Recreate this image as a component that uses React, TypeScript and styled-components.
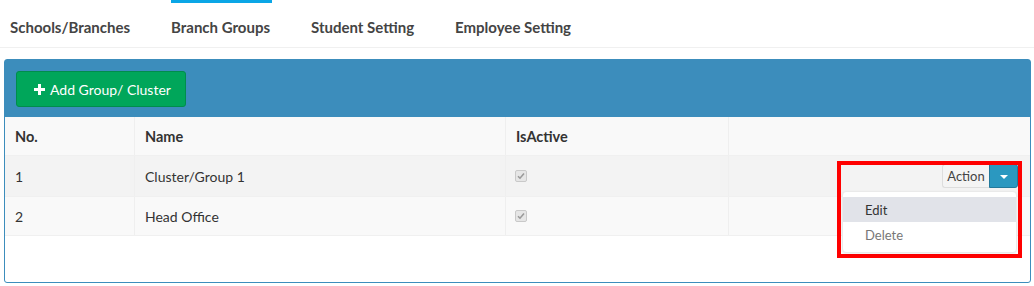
import React from "react";
import styled, { createGlobalStyle } from "styled-components";

const Global = createGlobalStyle`
  html, body { margin: 0; padding: 0; background: #ffffff; }
  body { font-family: "Lato", "Noto Sans", "Liberation Sans", sans-serif; font-size: 14px; color: #333; }
  * { box-sizing: border-box; }
`;

const Page = styled.div`
  width: 1034px;
  height: 286px;
  overflow: hidden;
`;

const TabBar = styled.div`
  display: flex;
  height: 48px;
  padding-left: 10px;
  gap: 41px;
  border-bottom: 1px solid #f0f0f0;
`;

const Tab = styled.div<{ $active?: boolean }>`
  position: relative;
  display: flex;
  align-items: center;
  font-weight: 700;
  font-size: 15px;
  color: #444;
  padding-top: 6px;
  &::before {
    content: "";
    position: absolute;
    left: 0;
    right: -2px;
    top: 0;
    height: 3px;
    background: ${(p) => (p.$active ? "#0aa6e6" : "transparent")};
  }
`;

const Panel = styled.div`
  margin: 11px 3px 0 4px;
  height: 224px;
  border: 1px solid #3c8dbc;
  border-radius: 3px;
  display: flex;
  flex-direction: column;
`;

const PanelHead = styled.div`
  background: #3c8dbc;
  padding: 11px 11px 10px;
  display: flex;
`;

const AddButton = styled.button`
  display: flex;
  align-items: center;
  gap: 5px;
  height: 36px;
  width: 170px;
  padding: 0 0 0 17px;
  background: #00a65a;
  border: 1px solid #008d4c;
  border-radius: 3px;
  color: #fff;
  font-family: inherit;
  font-size: 14px;
`;

const Table = styled.div`
  display: grid;
  grid-template-columns: 129px 371px 223px 1fr;
`;

const Row = styled.div<{ $bg: string; $h: number }>`
  display: contents;
  & > div {
    background: ${(p) => p.$bg};
    height: ${(p) => p.$h}px;
  }
`;

const Cell = styled.div<{ $head?: boolean; $first?: boolean }>`
  display: flex;
  align-items: center;
  padding-left: 10px;
  font-weight: ${(p) => (p.$head ? 700 : 400)};
  font-size: ${(p) => (p.$head ? "14.5px" : "14px")};
  color: #333;
  border-left: ${(p) => (p.$first ? "none" : "1px solid #efefef")};
  border-bottom: 1px solid #f0f0f0;
`;

const ActionCell = styled(Cell)`
  position: relative;
  justify-content: flex-end;
  padding-right: 12px;
  overflow: visible;
  z-index: 2;
`;

const Check = styled.span`
  width: 12px;
  height: 12px;
  margin-left: -1px;
  border: 1px solid #c9c9c9;
  border-radius: 2px;
  background: #e6e6e6;
  display: inline-flex;
  align-items: center;
  justify-content: center;
`;

const BtnGroup = styled.div`
  display: flex;
  height: 24px;
`;

const ActionBtn = styled.div`
  width: 47px;
  display: flex;
  align-items: center;
  justify-content: center;
  background: #f4f4f4;
  border: 1px solid #ddd;
  border-right: none;
  border-radius: 3px 0 0 3px;
  color: #444;
  font-size: 13px;
`;

const CaretBtn = styled.div`
  width: 29px;
  display: flex;
  align-items: center;
  justify-content: center;
  background: #2b98c0;
  border: 1px solid #23799b;
  border-radius: 0 3px 3px 0;
  &::after {
    content: "";
    border-left: 4px solid transparent;
    border-right: 4px solid transparent;
    border-top: 4px solid #fff;
    margin-top: 1px;
  }
`;

const Menu = styled.div`
  position: absolute;
  top: 35px;
  left: 113px;
  width: 175px;
  padding: 5px 0;
  background: #fff;
  border: 1px solid #eaeaea;
  border-radius: 4px;
  box-shadow: 0 1px 3px rgba(0, 0, 0, 0.08);
`;

const MenuItem = styled.div<{ $hover?: boolean }>`
  height: 25px;
  display: flex;
  align-items: center;
  padding-left: 22px;
  font-size: 13px;
  color: ${(p) => (p.$hover ? "#333" : "#777")};
  background: ${(p) => (p.$hover ? "#e1e3e9" : "transparent")};
`;

const Highlight = styled.div`
  position: absolute;
  top: 5px;
  left: 108px;
  width: 185px;
  height: 97px;
  border: 4px solid #ff0000;
  pointer-events: none;
`;

const CheckBox = () => (
  <Check>
    <svg width="8" height="8" viewBox="0 0 8 8">
      <path d="M1 4.2 L3 6.2 L7 1.6" stroke="#9a9a9a" strokeWidth="1.6" fill="none" />
    </svg>
  </Check>
);

export default function App() {
  return (
    <Page>
      <Global />
      <TabBar>
        <Tab>Schools/Branches</Tab>
        <Tab $active>Branch Groups</Tab>
        <Tab>Student Setting</Tab>
        <Tab>Employee Setting</Tab>
      </TabBar>
      <Panel>
        <PanelHead>
          <AddButton>
            <svg width="11" height="11" viewBox="0 0 11 11">
              <path d="M4 0h3v4h4v3H7v4H4V7H0V4h4z" fill="#fff" />
            </svg>
            Add Group/ Cluster
          </AddButton>
        </PanelHead>
        <Table>
          <Row $bg="#f9f9f9" $h={39}>
            <Cell $head $first>No.</Cell>
            <Cell $head>Name</Cell>
            <Cell $head>IsActive</Cell>
            <Cell $head></Cell>
          </Row>
          <Row $bg="#f3f3f3" $h={41}>
            <Cell $first>1</Cell>
            <Cell>Cluster/Group 1</Cell>
            <Cell><CheckBox /></Cell>
            <ActionCell>
              <BtnGroup>
                <ActionBtn>Action</ActionBtn>
                <CaretBtn />
              </BtnGroup>
              <Highlight />
              <Menu>
                <MenuItem $hover>Edit</MenuItem>
                <MenuItem>Delete</MenuItem>
              </Menu>
            </ActionCell>
          </Row>
          <Row $bg="#f9f9f9" $h={39}>
            <Cell $first>2</Cell>
            <Cell>Head Office</Cell>
            <Cell><CheckBox /></Cell>
            <Cell></Cell>
          </Row>
        </Table>
      </Panel>
    </Page>
  );
}
